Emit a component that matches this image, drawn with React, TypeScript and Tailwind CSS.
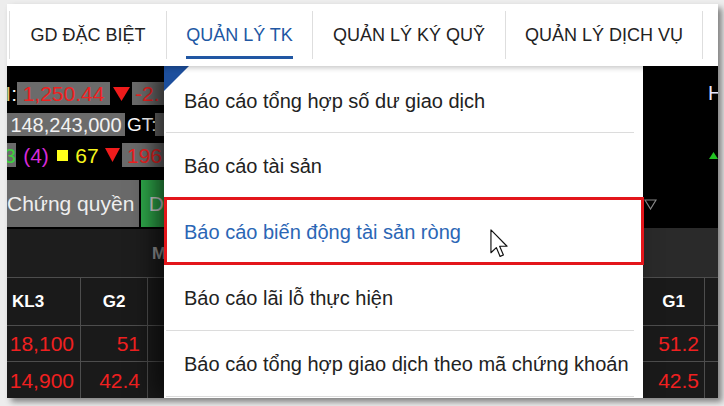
import React from "react";

const TriDown = ({ w = 17, h = 13 }: { w?: number; h?: number }) => (
  <svg width={w} height={h} viewBox={`0 0 ${w} ${h}`}>
    <polygon points={`0,0 ${w},0 ${w / 2},${h}`} fill="#f01c1c" />
  </svg>
);

function Nav() {
  const sep = <div className="w-px h-[48px] bg-[#dedede]" />;
  const tab = "h-full flex items-center justify-center text-[18px] leading-[20px] text-[#222]";
  return (
    <div className="relative z-20 h-[62px] bg-white flex items-center shadow-[0_2px_5px_rgba(0,0,0,0.22)]">
      <div className="w-[2px]" />
      {sep}
      <div className={`${tab} w-[156px]`}>GD ĐẶC BIỆT</div>
      {sep}
      <div className="w-[145px] h-full flex justify-center">
        <div className="flex flex-col items-stretch">
          <div className="h-[21px]" />
          <span className="text-[18px] leading-[20px] text-[#2157a3] whitespace-nowrap">QUẢN LÝ TK</span>
          <div className="mt-[11px] h-[3px] bg-[#2157a3]" />
        </div>
      </div>
      {sep}
      <div className={`${tab} w-[192px]`}>QUẢN LÝ KÝ QUỸ</div>
      {sep}
      <div className={`${tab} w-[196px]`}>QUẢN LÝ DỊCH VỤ</div>
      {sep}
    </div>
  );
}

function LeftPanel() {
  const gray = "bg-[#6b6b6b]";
  return (
    <div className="w-[157px] h-full bg-black flex flex-col overflow-hidden text-[21px] leading-none">
      <div className="h-[114px] flex flex-col pt-[16px]">
        {/* row 1 */}
        <div className="flex h-[23px] items-stretch">
          <div className="w-[10px] flex items-center justify-end overflow-hidden whitespace-nowrap">
            <span className="text-[#d9c27a]">I</span>
            <span className="text-white">:</span>
          </div>
          <div className={`w-[93px] ${gray} flex items-center justify-center text-[#f02020]`}>1,250.44</div>
          <div className="ml-[3px] w-[17px] flex items-center">
            <TriDown w={17} h={14} />
          </div>
          <div className={`ml-[2px] flex-1 ${gray} flex items-center pl-[3px] text-[#f02020] overflow-hidden whitespace-nowrap`}>-2.</div>
        </div>
        {/* row 2 */}
        <div className="flex h-[23px] items-stretch mt-[8px]">
          <div className={`w-[118px] ${gray} flex items-center justify-center text-[20px] text-[#f2f2f2]`}>148,243,000</div>
          <div className="ml-[2px] w-[28px] flex items-center overflow-hidden whitespace-nowrap text-white text-[19px]">GT:</div>
          <div className={`flex-1 ${gray}`} />
        </div>
        {/* row 3 */}
        <div className="flex h-[24px] items-stretch mt-[7px]">
          <div className={`w-[9px] ${gray} flex items-center justify-end overflow-hidden text-[#3dd23d]`}>3</div>
          <div className="w-[40px] flex items-center justify-center text-[#d52ad8]">(4)</div>
          <div className="ml-[1px] w-[11px] h-[11px] self-center bg-[#ffff1a]" />
          <div className="ml-[4px] w-[30px] flex items-center justify-center text-[#f5f51c]">67</div>
          <div className="ml-[3px] w-[15px] flex items-center">
            <TriDown w={15} h={14} />
          </div>
          <div className={`ml-[2px] flex-1 ${gray} flex items-center pl-[5px] text-[#f02020]`}>196</div>
        </div>
      </div>
      {/* buttons */}
      <div className="h-[47px] flex">
        <div className="w-[134px] bg-[#6a6a6a] flex items-center text-[#eeeeee] whitespace-nowrap">Chứng quyền</div>
        <div className="ml-[2px] flex-1 bg-[#2ea84a] flex items-center pl-[8px] text-[#d8d8d8]">D</div>
      </div>
      <div className="h-[2px]" />
      <div className="h-[48px] bg-[#1d1d1d] flex items-center pl-[145px] text-[17px] font-bold text-[#9a9a9a] whitespace-nowrap">M</div>
      {/* table */}
      <div className="grid grid-cols-[74px_67px_16px] grid-rows-[49px_36px_36px] bg-[#1a1a1a]">
        <div className="border-t border-r border-b border-[#4d4d4d] flex items-center pl-[5px] text-[17px] font-bold text-white">KL3</div>
        <div className="border-t border-r border-b border-[#4d4d4d] flex items-center justify-center text-[17px] font-bold text-white">G2</div>
        <div className="border-t border-b border-[#4d4d4d]" />
        <div className="border-r border-b border-[#4d4d4d] flex items-center justify-end pr-[6px] text-[#f02020]">18,100</div>
        <div className="border-r border-b border-[#4d4d4d] flex items-center justify-end pr-[7px] text-[#f02020]">51</div>
        <div className="border-b border-[#4d4d4d]" />
        <div className="border-r border-[#4d4d4d] flex items-center justify-end pr-[6px] text-[#f02020]">14,900</div>
        <div className="border-r border-[#4d4d4d] flex items-center justify-end pr-[7px] text-[#f02020]">42.4</div>
        <div />
      </div>
    </div>
  );
}

function RightPanel() {
  return (
    <div className="w-[75px] h-full bg-black flex flex-col overflow-hidden text-[21px] leading-none">
      <div className="h-[162px] flex flex-col">
        <div className="pt-[16px] pl-[65px] h-[38px] text-[20px] leading-[22px] text-[#e6e6ff] whitespace-nowrap">H</div>
        <div className="mt-[46px] pl-[66px] h-[11px] flex">
          <svg width="14" height="11" viewBox="0 0 14 11">
            <polygon points="7,0 14,11 0,11" fill="#22c322" />
          </svg>
        </div>
        <div className="mt-[38px] pl-[1px] flex">
          <svg width="13" height="11" viewBox="0 0 13 11">
            <polygon points="1,1 12,1 6.5,10" fill="none" stroke="#8a8a8a" strokeWidth="1.2" />
          </svg>
        </div>
      </div>
      <div className="h-[49px] bg-[#2a2a2a]" />
      <div className="grid grid-cols-[62px_13px] grid-rows-[49px_36px_36px] bg-[#1a1a1a]">
        <div className="border-t border-r border-b border-[#4d4d4d] flex items-center justify-center text-[17px] font-bold text-white">G1</div>
        <div className="border-t border-b border-[#4d4d4d]" />
        <div className="border-r border-b border-[#4d4d4d] flex items-center justify-end pr-[5px] text-[#f02020]">51.2</div>
        <div className="border-b border-[#4d4d4d]" />
        <div className="border-r border-[#4d4d4d] flex items-center justify-end pr-[5px] text-[#f02020]">42.5</div>
        <div />
      </div>
    </div>
  );
}

function Dropdown() {
  const items = [
    "Báo cáo tổng hợp số dư giao dịch",
    "Báo cáo tài sản",
    "Báo cáo biến động tài sản ròng",
    "Báo cáo lãi lỗ thực hiện",
    "Báo cáo tổng hợp giao dịch theo mã chứng khoán",
  ];
  return (
    <div className="relative z-10 w-[479px] h-full bg-white flex flex-col shadow-[-10px_0_22px_rgba(0,0,0,0.6)]">
      <svg className="absolute left-0 top-0" width="25" height="25" viewBox="0 0 25 25">
        <polygon points="0,0 25,0 0,25" fill="#1d4f9d" />
      </svg>
      {items.map((t, i) => (
        <div key={t} className="relative flex flex-col">
          <div
            className={`${i === 0 ? "h-[66px] pt-[3px]" : "h-[65px] pt-[1px]"} flex items-center pl-[20px] text-[20px] leading-[24px] whitespace-nowrap ${
              i === 2 ? "text-[#2b66b5]" : "text-[#222]"
            }`}
          >
            {t}
          </div>
          <div className="h-px ml-[2px] mr-[9px] bg-[#dcdcdc]" />
          {i === 2 && (
            <div className="absolute left-0 right-[-1px] top-[-2px] bottom-0 border-[3px] border-[#e3161b]" />
          )}
        </div>
      ))}
    </div>
  );
}

export default function App() {
  return (
    <div className="relative w-[724px] h-[406px] bg-[#ededed] pl-[7px] pt-[4px] overflow-hidden font-['Liberation_Sans',Arial,sans-serif]">
      <div className="w-[711px] h-[394px] flex flex-col overflow-hidden shadow-[4px_4px_6px_rgba(0,0,0,0.45)]">
        <Nav />
        <div className="h-[332px] flex">
          <LeftPanel />
          <Dropdown />
          <RightPanel />
        </div>
      </div>
      <svg className="absolute z-30 left-[490px] top-[229px]" width="19" height="29" viewBox="0 0 13 20">
        <path
          d="M0.6 0.6 L0.6 16.4 L4.3 12.8 L6.9 18.9 L9.2 17.9 L6.6 11.9 L11.7 11.9 Z"
          fill="#ffffff"
          stroke="#111111"
          strokeWidth="0.8"
          strokeLinejoin="round"
        />
      </svg>
    </div>
  );
}
